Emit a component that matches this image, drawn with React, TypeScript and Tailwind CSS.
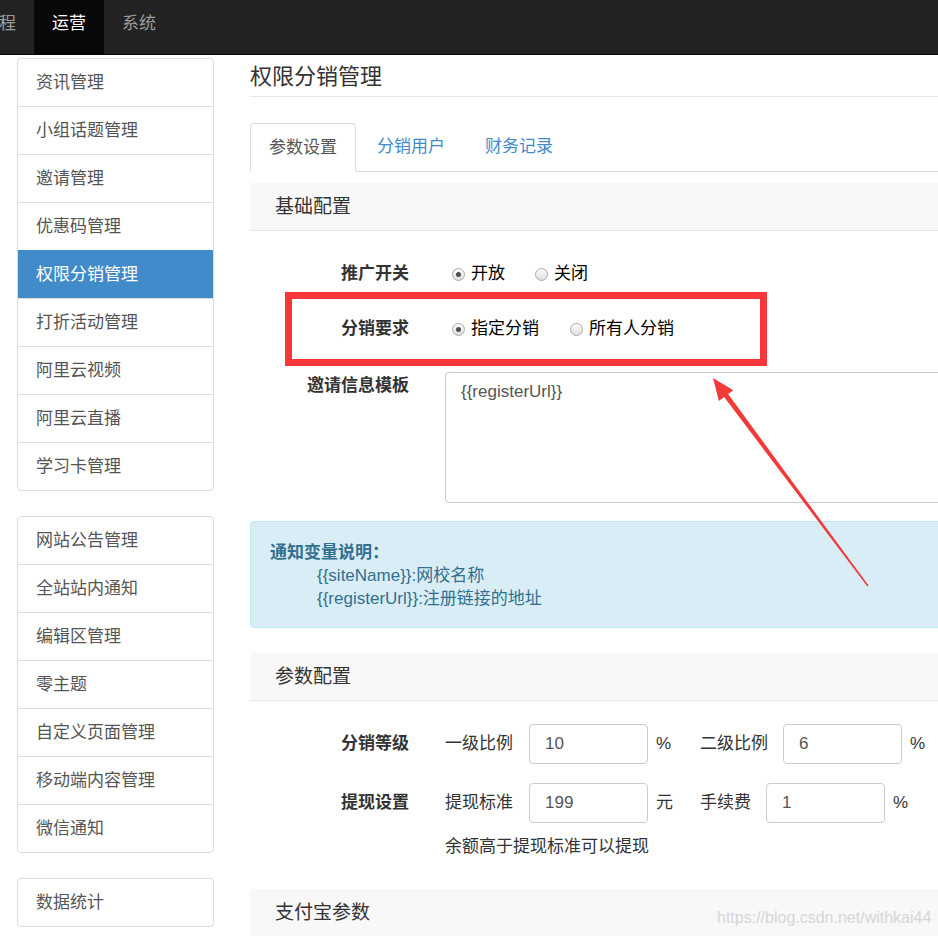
import * as React from "react"

const NAV_ITEMS = [
  { label: "课程", active: false },
  { label: "运营", active: true },
  { label: "系统", active: false },
]

const SIDEBAR_GROUPS = [
  ["资讯管理", "小组话题管理", "邀请管理", "优惠码管理", "权限分销管理", "打折活动管理", "阿里云视频", "阿里云直播", "学习卡管理"],
  ["网站公告管理", "全站站内通知", "编辑区管理", "零主题", "自定义页面管理", "移动端内容管理", "微信通知"],
  ["数据统计"],
]

const ACTIVE_MENU = "权限分销管理"

function Radio({ checked, label }: { checked?: boolean; label: string }) {
  return (
    <label className="ml-[7px] flex items-center">
      <span className="flex h-[13px] w-[13px] items-center justify-center rounded-full border border-[#a9a9a9] bg-gradient-to-b from-[#fdfdfd] to-[#dedede]">
        {checked ? <span className="h-[5px] w-[5px] rounded-full bg-[#4d4d4d]" /> : null}
      </span>
      <span className="ml-[6px]">{label}</span>
    </label>
  )
}

function FormRow({ label, children }: { label: string; children: React.ReactNode }) {
  return (
    <div className="flex h-[40px] items-center">
      <div className="w-[159px] text-right font-bold text-[#333]">{label}</div>
      <div className="ml-[36px] flex items-center">{children}</div>
    </div>
  )
}

function PanelHeading({ title, className = "" }: { title: string; className?: string }) {
  return (
    <div className={`flex h-[48px] items-center border-b border-[#e6e6e6] bg-[#f8f8f8] px-[25px] text-[19px] text-[#333] ${className}`}>
      {title}
    </div>
  )
}

function NumberField({ label, value, unit, first }: { label: string; value: string; unit: string; first?: boolean }) {
  return (
    <div className="flex items-center">
      <span className="text-[#333]">{label}</span>
      <div className={`${first ? "ml-[16px]" : "ml-[15px]"} flex h-[40px] w-[119px] items-center rounded-[4px] border border-[#ccc] bg-white px-[15px] text-[#555]`}>
        {value}
      </div>
      <span className={`ml-[8px] text-[#333] ${first ? "w-[44px]" : ""}`}>{unit}</span>
    </div>
  )
}

export default function App() {
  return (
    <div className="relative h-[936px] w-[938px] overflow-hidden bg-white font-['Liberation_Sans','Noto_Sans_CJK_SC',sans-serif] text-[17px] leading-[20px]">
      {/* Navbar */}
      <div className="flex h-[55px] border-b border-[#080808] bg-[#222]">
        <ul className="ml-[-36px] flex">
          {NAV_ITEMS.map((item) => (
            <li
              key={item.label}
              className={`h-[54px] px-[18px] pt-[14px] ${item.active ? "bg-[#080808] text-white" : "text-[#9d9d9d]"}`}
            >
              {item.label}
            </li>
          ))}
        </ul>
      </div>

      <div className="flex">
        {/* Sidebar */}
        <div className="ml-[17px] mt-[3px] flex w-[197px] shrink-0 flex-col gap-[25px]">
          {SIDEBAR_GROUPS.map((group, gi) => (
            <div key={gi} className="overflow-hidden rounded-[4px] border border-[#ddd]">
              {group.map((item, i) => {
                const active = item === ACTIVE_MENU
                return (
                  <div
                    key={item}
                    className={`flex items-center px-[18px] ${i > 0 ? "h-[48px] border-t" : "h-[47px]"} ${
                      active ? "border-[#428bca] bg-[#428bca] text-white" : "border-[#ddd] text-[#555]"
                    }`}
                  >
                    {item}
                  </div>
                )
              })}
            </div>
          ))}
        </div>

        {/* Main */}
        <div className="ml-[36px] w-[760px] shrink-0">
          <h1 className="mt-[7px] border-b border-[#e8e8e8] pb-[4px] text-[22px] leading-[30px] text-[#333]">权限分销管理</h1>

          {/* Tabs */}
          <ul className="mt-[26px] flex border-b border-[#ddd]">
            <li className="-mb-px flex h-[49px] items-center rounded-t-[4px] border border-[#ddd] border-b-white bg-white px-[18px] text-[#555]">
              参数设置
            </li>
            <li className="ml-[2px] flex h-[48px] items-center px-[19px] text-[#428bca]">分销用户</li>
            <li className="ml-[2px] flex h-[48px] items-center px-[19px] text-[#428bca]">财务记录</li>
          </ul>

          <PanelHeading title="基础配置" className="mt-[11px]" />

          <div className="pt-[23px]">
            <FormRow label="推广开关">
              <Radio checked label="开放" />
              <div className="ml-[23px]">
                <Radio label="关闭" />
              </div>
            </FormRow>
            <div className="mt-[15px]">
              <FormRow label="分销要求">
                <Radio checked label="指定分销" />
                <div className="ml-[24px]">
                  <Radio label="所有人分销" />
                </div>
              </FormRow>
            </div>
            <div className="mt-[23px] flex items-start">
              <div className="w-[159px] pt-[4px] text-right font-bold text-[#333]">邀请信息模板</div>
              <div className="ml-[36px] h-[131px] flex-1 rounded-[4px] border border-[#ccc] px-[15px] pt-[9px] text-[#555]">
                {"{{registerUrl}}"}
              </div>
            </div>
          </div>

          {/* Alert */}
          <div className="mt-[18px] h-[107px] rounded-[4px] border border-[#bce8f1] bg-[#d9edf7] px-[19px] pt-[19px] leading-[23px] text-[#31708f]">
            <div className="font-bold">通知变量说明：</div>
            <div className="pl-[47px]">{"{{siteName}}"}:网校名称</div>
            <div className="pl-[47px]">{"{{registerUrl}}"}:注册链接的地址</div>
          </div>

          <PanelHeading title="参数配置" className="mt-[25px]" />

          <div className="pt-[23px]">
            <FormRow label="分销等级">
              <NumberField first label="一级比例" value="10" unit="%" />
              <NumberField label="二级比例" value="6" unit="%" />
            </FormRow>
            <div className="mt-[19px]">
              <FormRow label="提现设置">
                <NumberField first label="提现标准" value="199" unit="元" />
                <NumberField label="手续费" value="1" unit="%" />
              </FormRow>
            </div>
            <div className="ml-[195px] mt-[14px] text-[#333]">余额高于提现标准可以提现</div>
          </div>

          <PanelHeading title="支付宝参数" className="mt-[32px]" />
        </div>
      </div>

      {/* Screenshot annotations */}
      <svg className="pointer-events-none absolute left-0 top-0" width="938" height="936" viewBox="0 0 938 936">
        <rect x="288.5" y="295.5" width="475" height="67" fill="none" stroke="#f83838" strokeWidth="7" />
        <polygon
          points="713,378 733.3,390.2 728.1,394.1 868.6,585.6 867.4,586.4 724.1,397.1 718.9,401"
          fill="#f23a3a"
        />
      </svg>

      <div className="pointer-events-none absolute left-[717px] top-[908px] text-[16px] leading-[20px] text-[#d6d6d6]">
        https://blog.csdn.net/withkai44
      </div>
    </div>
  )
}
